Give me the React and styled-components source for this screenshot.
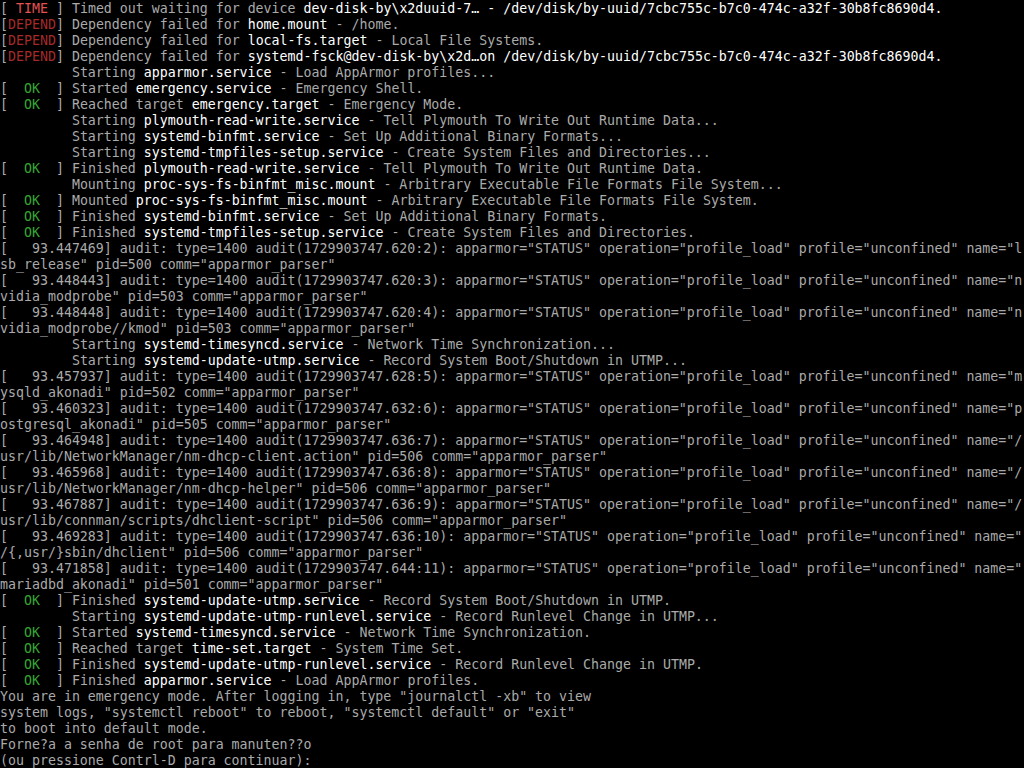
import React from "react";
import styled, { createGlobalStyle } from "styled-components";

const GlobalStyle = createGlobalStyle`
  html, body {
    margin: 0;
    padding: 0;
    background: #000;
  }
`;

const Screen = styled.div`
  width: 1024px;
  height: 768px;
  overflow: hidden;
  background: #000;
  color: #aaaaaa;
  font-family: "DejaVu Sans Mono", "Liberation Mono", monospace;
  font-size: 13.28px;
`;

const Line = styled.div`
  height: 16px;
  line-height: 18px;
  white-space: pre;
`;

const statusColors = {
  TIME: "#e25252",
  DEPEND: "#a62a2a",
  OK: "#34a834",
};

const Status = styled.span`
  color: ${(props) => statusColors[props.kind]};
`;

const Hi = styled.span`
  color: #ffffff;
`;

const tagText = {
  TIME: " TIME ",
  DEPEND: "DEPEND",
  OK: "  OK  ",
};

// § marks the bright (unit name) part of a line
const lines = [
  ["TIME", "Timed out waiting for device §dev-disk-by\\x2duuid-7… - /dev/disk/by-uuid/7cbc755c-b7c0-474c-a32f-30b8fc8690d4.§"],
  ["DEPEND", "Dependency failed for §home.mount§ - /home."],
  ["DEPEND", "Dependency failed for §local-fs.target§ - Local File Systems."],
  ["DEPEND", "Dependency failed for §systemd-fsck@dev-disk-by\\x2d…on /dev/disk/by-uuid/7cbc755c-b7c0-474c-a32f-30b8fc8690d4.§"],
  ["SP", "Starting §apparmor.service§ - Load AppArmor profiles..."],
  ["OK", "Started §emergency.service§ - Emergency Shell."],
  ["OK", "Reached target §emergency.target§ - Emergency Mode."],
  ["SP", "Starting §plymouth-read-write.service§ - Tell Plymouth To Write Out Runtime Data..."],
  ["SP", "Starting §systemd-binfmt.service§ - Set Up Additional Binary Formats..."],
  ["SP", "Starting §systemd-tmpfiles-setup.service§ - Create System Files and Directories..."],
  ["OK", "Finished §plymouth-read-write.service§ - Tell Plymouth To Write Out Runtime Data."],
  ["SP", "Mounting §proc-sys-fs-binfmt_misc.mount§ - Arbitrary Executable File Formats File System..."],
  ["OK", "Mounted §proc-sys-fs-binfmt_misc.mount§ - Arbitrary Executable File Formats File System."],
  ["OK", "Finished §systemd-binfmt.service§ - Set Up Additional Binary Formats."],
  ["OK", "Finished §systemd-tmpfiles-setup.service§ - Create System Files and Directories."],
  [null, '[   93.447469] audit: type=1400 audit(1729903747.620:2): apparmor="STATUS" operation="profile_load" profile="unconfined" name="l'],
  [null, 'sb_release" pid=500 comm="apparmor_parser"'],
  [null, '[   93.448443] audit: type=1400 audit(1729903747.620:3): apparmor="STATUS" operation="profile_load" profile="unconfined" name="n'],
  [null, 'vidia_modprobe" pid=503 comm="apparmor_parser"'],
  [null, '[   93.448448] audit: type=1400 audit(1729903747.620:4): apparmor="STATUS" operation="profile_load" profile="unconfined" name="n'],
  [null, 'vidia_modprobe//kmod" pid=503 comm="apparmor_parser"'],
  ["SP", "Starting §systemd-timesyncd.service§ - Network Time Synchronization..."],
  ["SP", "Starting §systemd-update-utmp.service§ - Record System Boot/Shutdown in UTMP..."],
  [null, '[   93.457937] audit: type=1400 audit(1729903747.628:5): apparmor="STATUS" operation="profile_load" profile="unconfined" name="m'],
  [null, 'ysqld_akonadi" pid=502 comm="apparmor_parser"'],
  [null, '[   93.460323] audit: type=1400 audit(1729903747.632:6): apparmor="STATUS" operation="profile_load" profile="unconfined" name="p'],
  [null, 'ostgresql_akonadi" pid=505 comm="apparmor_parser"'],
  [null, '[   93.464948] audit: type=1400 audit(1729903747.636:7): apparmor="STATUS" operation="profile_load" profile="unconfined" name="/'],
  [null, 'usr/lib/NetworkManager/nm-dhcp-client.action" pid=506 comm="apparmor_parser"'],
  [null, '[   93.465968] audit: type=1400 audit(1729903747.636:8): apparmor="STATUS" operation="profile_load" profile="unconfined" name="/'],
  [null, 'usr/lib/NetworkManager/nm-dhcp-helper" pid=506 comm="apparmor_parser"'],
  [null, '[   93.467887] audit: type=1400 audit(1729903747.636:9): apparmor="STATUS" operation="profile_load" profile="unconfined" name="/'],
  [null, 'usr/lib/connman/scripts/dhclient-script" pid=506 comm="apparmor_parser"'],
  [null, '[   93.469283] audit: type=1400 audit(1729903747.636:10): apparmor="STATUS" operation="profile_load" profile="unconfined" name="'],
  [null, '/{,usr/}sbin/dhclient" pid=506 comm="apparmor_parser"'],
  [null, '[   93.471858] audit: type=1400 audit(1729903747.644:11): apparmor="STATUS" operation="profile_load" profile="unconfined" name="'],
  [null, 'mariadbd_akonadi" pid=501 comm="apparmor_parser"'],
  ["OK", "Finished §systemd-update-utmp.service§ - Record System Boot/Shutdown in UTMP."],
  ["SP", "Starting §systemd-update-utmp-runlevel.service§ - Record Runlevel Change in UTMP..."],
  ["OK", "Started §systemd-timesyncd.service§ - Network Time Synchronization."],
  ["OK", "Reached target §time-set.target§ - System Time Set."],
  ["OK", "Finished §systemd-update-utmp-runlevel.service§ - Record Runlevel Change in UTMP."],
  ["OK", "Finished §apparmor.service§ - Load AppArmor profiles."],
  [null, 'You are in emergency mode. After logging in, type "journalctl -xb" to view'],
  [null, 'system logs, "systemctl reboot" to reboot, "systemctl default" or "exit"'],
  [null, "to boot into default mode."],
  [null, "Forne?a a senha de root para manuten??o"],
  [null, "(ou pressione Contrl-D para continuar):"],
];

const Message = ({ text }) =>
  text.split("§").map((part, i) =>
    i % 2 === 1 ? <Hi key={i}>{part}</Hi> : <React.Fragment key={i}>{part}</React.Fragment>
  );

const ConsoleLine = ({ kind, text }) => {
  if (kind === "SP") {
    return (
      <Line>
        {"         "}
        <Message text={text} />
      </Line>
    );
  }
  if (kind) {
    return (
      <Line>
        [<Status kind={kind}>{tagText[kind]}</Status>]{" "}
        <Message text={text} />
      </Line>
    );
  }
  return (
    <Line>
      <Message text={text} />
    </Line>
  );
};

const App = () => {
  return (
    <>
      <GlobalStyle />
      <Screen>
        {lines.map(([kind, text], i) => (
          <ConsoleLine key={i} kind={kind} text={text} />
        ))}
      </Screen>
    </>
  );
};

export default App;
